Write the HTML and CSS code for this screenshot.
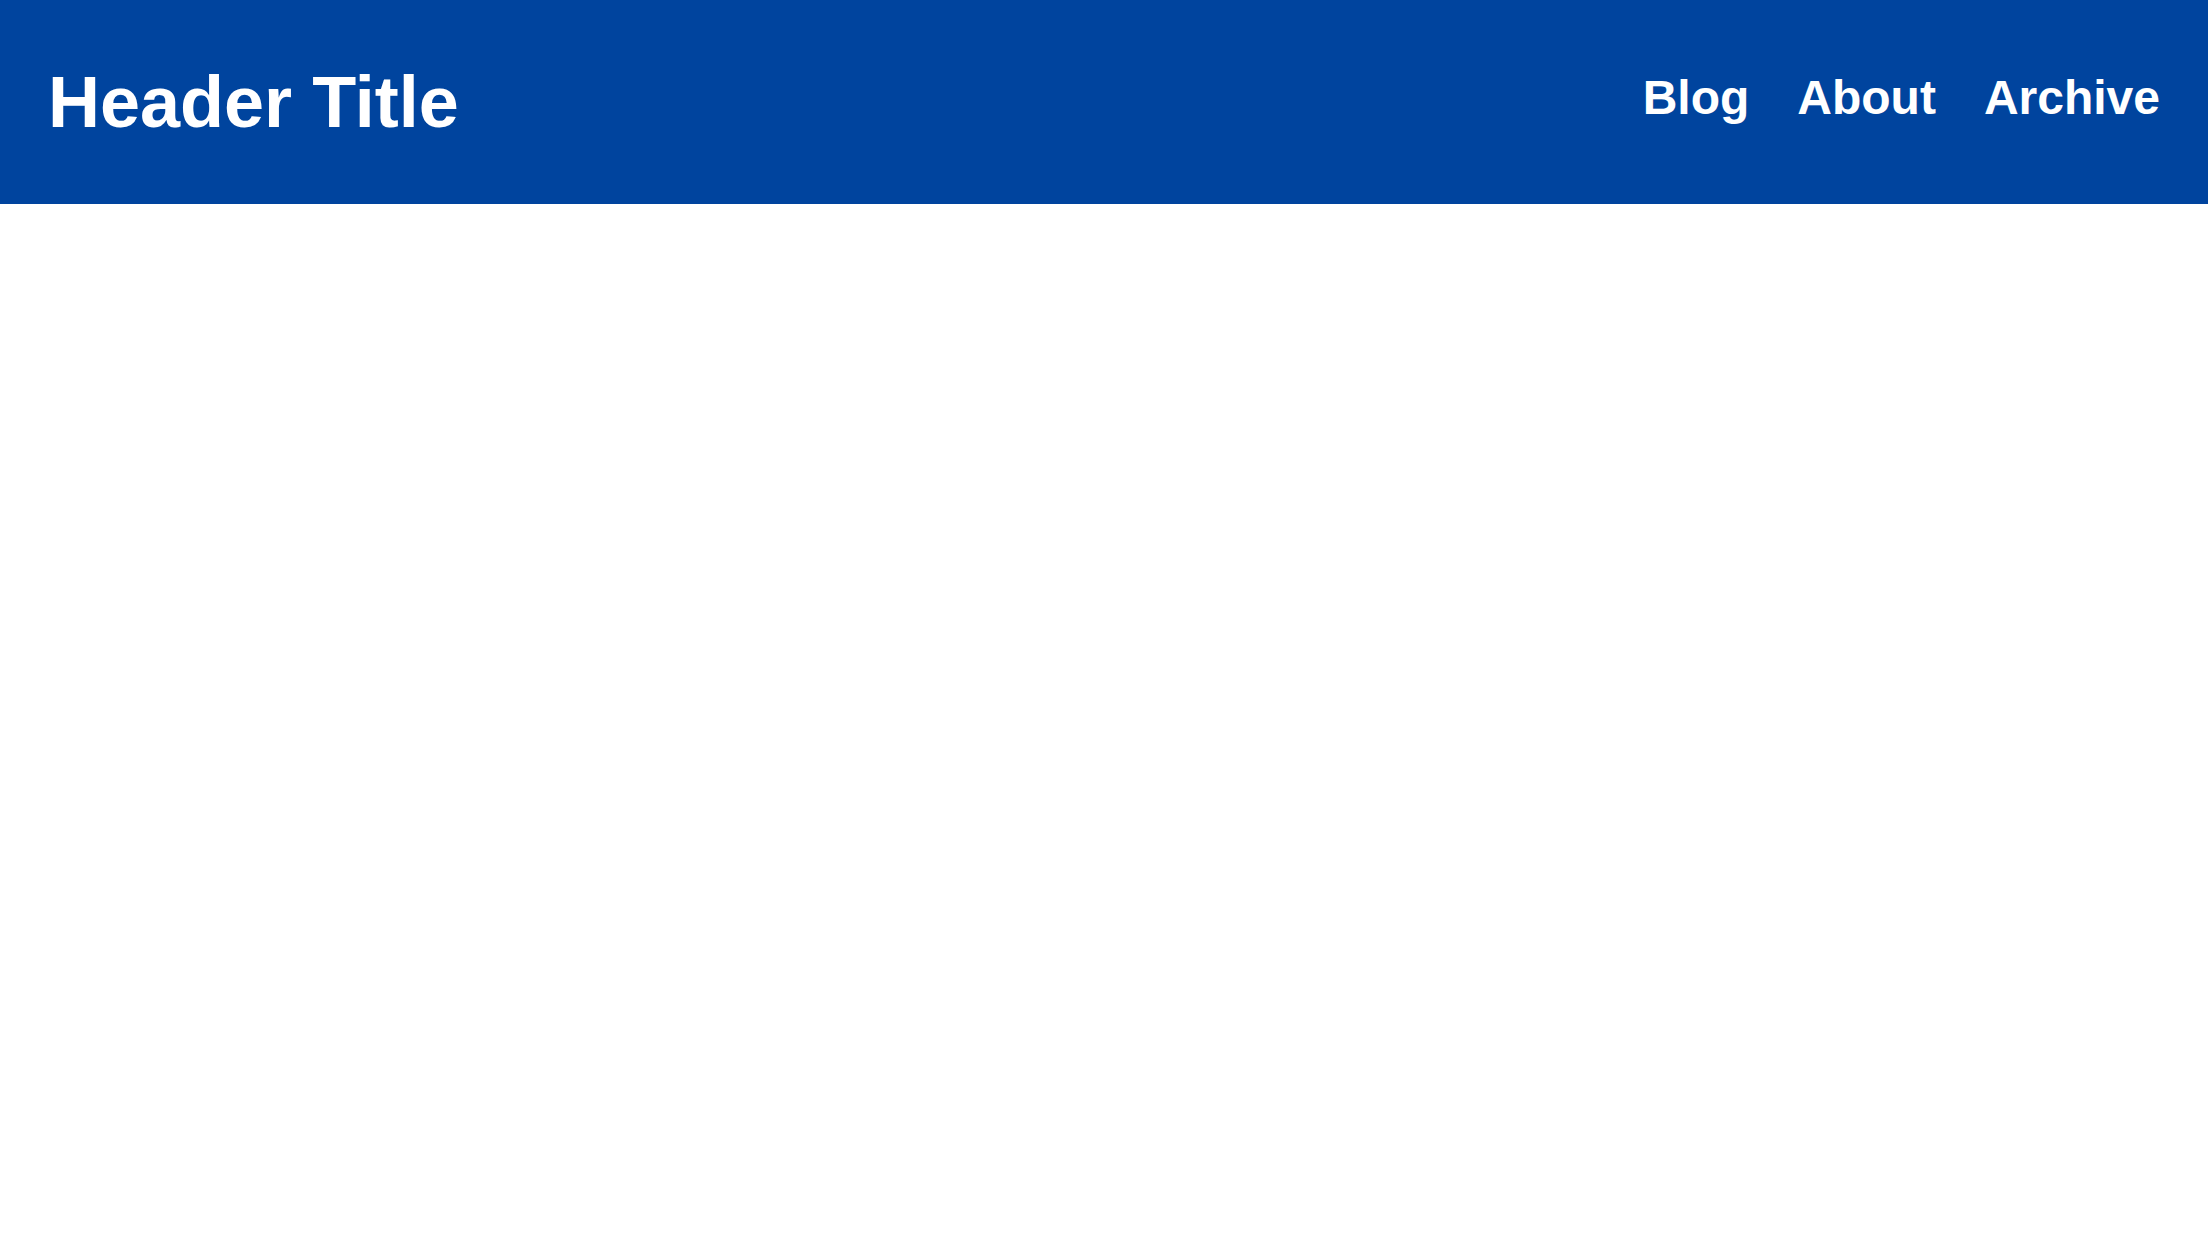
FILE: index.html
```html
<!DOCTYPE html>
<html lang="en">
<head>
<meta charset="utf-8">
<title>Header Title</title>
<link rel="stylesheet" href="styles.css">
</head>
<body>
<header class="site-header">
  <h1 class="site-title">Header Title</h1>
  <nav class="site-nav">
    <a class="nav-link" href="#">Blog</a>
    <a class="nav-link" href="#">About</a>
    <a class="nav-link" href="#">Archive</a>
  </nav>
</header>
<main class="content"></main>
</body>
</html>
```

FILE: styles.css
```css
html, body {
  margin: 0;
  padding: 0;
  background: #ffffff;
  font-family: "Liberation Sans", Arial, Helvetica, sans-serif;
}

.site-header {
  box-sizing: border-box;
  height: 204px;
  padding: 0 48px;
  background: #00449e;
  color: #ffffff;
  display: flex;
  align-items: center;
  justify-content: space-between;
}

.site-title {
  margin: 0;
  font-size: 72px;
  line-height: 1;
  font-weight: 700;
}

.site-nav {
  display: flex;
  gap: 48px;
  margin-bottom: 8px;
}

.nav-link {
  color: #ffffff;
  text-decoration: none;
  font-size: 48px;
  line-height: 1;
  font-weight: 700;
}
```
